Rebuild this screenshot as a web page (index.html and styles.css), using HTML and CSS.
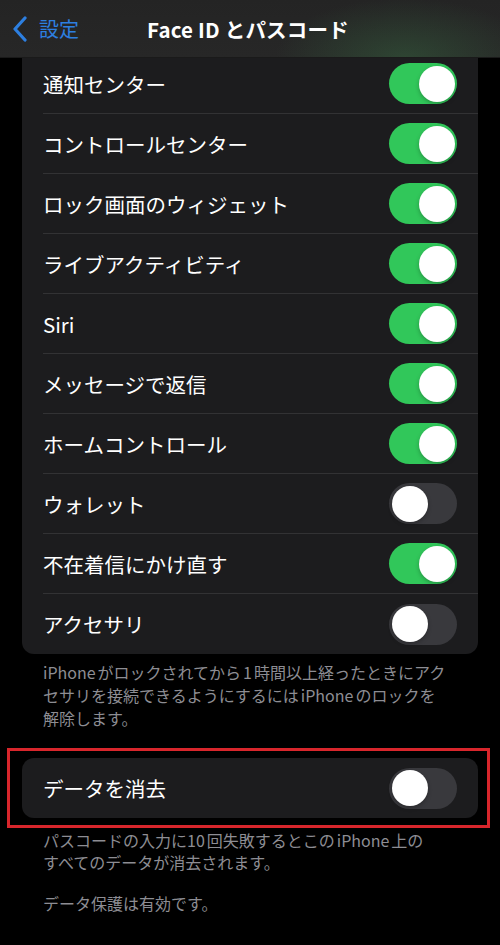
FILE: index.html
```html
<!DOCTYPE html>
<html lang="ja">
<head>
<meta charset="utf-8">
<link rel="stylesheet" href="styles.css">
</head>
<body>
<div class="screen">
  <header class="header">
    <div class="back">
      <svg class="chev" width="16" height="26" viewBox="0 0 16 26"><path d="M13 2 L3 13 L13 24" fill="none" stroke="#2d7fe0" stroke-width="3.2" stroke-linecap="round" stroke-linejoin="round"/></svg>
      <span class="back-label">設定</span>
    </div>
    <h1 class="title">Face ID とパスコード</h1>
  </header>

  <main class="content">
    <section class="card card-top">
      <div class="row"><span class="label">通知センター</span><span class="toggle on"><span class="knob"></span></span></div>
      <div class="row"><span class="label">コントロールセンター</span><span class="toggle on"><span class="knob"></span></span></div>
      <div class="row"><span class="label">ロック画面のウィジェット</span><span class="toggle on"><span class="knob"></span></span></div>
      <div class="row"><span class="label">ライブアクティビティ</span><span class="toggle on"><span class="knob"></span></span></div>
      <div class="row"><span class="label">Siri</span><span class="toggle on"><span class="knob"></span></span></div>
      <div class="row"><span class="label">メッセージで返信</span><span class="toggle on"><span class="knob"></span></span></div>
      <div class="row"><span class="label">ホームコントロール</span><span class="toggle on"><span class="knob"></span></span></div>
      <div class="row"><span class="label">ウォレット</span><span class="toggle"><span class="knob"></span></span></div>
      <div class="row"><span class="label">不在着信にかけ直す</span><span class="toggle on"><span class="knob"></span></span></div>
      <div class="row"><span class="label">アクセサリ</span><span class="toggle"><span class="knob"></span></span></div>
    </section>
    <p class="note note-first"><span class="latin">iPhone</span>がロックされてから<span class="latin">1</span>時間以上経ったときにアク<br>セサリを接続できるようにするには<span class="latin">iPhone</span>のロックを<br>解除します。</p>

    <div class="highlight">
      <section class="card">
        <div class="row"><span class="label">データを消去</span><span class="toggle"><span class="knob"></span></span></div>
      </section>
    </div>
    <div class="note note-second">
      <p>パスコードの入力に<span class="latin">10</span>回失敗するとこの<span class="latin">iPhone</span>上の<br>すべてのデータが消去されます。</p>
      <p class="para2">データ保護は有効です。</p>
    </div>
  </main>
</div>
</body>
</html>
```

FILE: styles.css
```css
* { box-sizing: border-box; }
html, body {
  margin: 0;
  padding: 0;
  background: #000;
}
body {
  font-family: "Noto Sans CJK JP", "Noto Sans", sans-serif;
  color: #fff;
}
.screen {
  position: relative;
  width: 500px;
  height: 945px;
  overflow: hidden;
  background: #000;
}
.header {
  position: absolute;
  top: 0;
  left: 0;
  right: 0;
  height: 58px;
  z-index: 2;
  display: flex;
  align-items: center;
  justify-content: center;
  background:
    radial-gradient(ellipse 130px 60px at 405px 58px, rgba(55, 105, 65, 0.45), rgba(55, 105, 65, 0) 100%),
    linear-gradient(180deg, #242424 0%, #272727 100%);
  border-bottom: 1px solid #1a1a1a;
}
.back {
  position: absolute;
  left: 12px;
  top: 16px;
  display: flex;
  align-items: center;
  gap: 11px;
}
.chev { display: block; }
.back-label {
  color: #2d7fe0;
  font-size: 20px;
  line-height: 26px;
}
.title {
  margin: 0 0 0 -4px;
  font-size: 20.5px;
  font-weight: 700;
  letter-spacing: 0.2px;
  line-height: 26px;
}
.content {
  padding-top: 54px;
}
.card {
  margin: 0 22px;
  background: #1c1c1e;
  border-radius: 12px;
}
.card-top { border-radius: 0 0 12px 12px; }
.highlight .card { margin: 0; }
.row {
  height: 60px;
  margin-left: 21px;
  padding-right: 21px;
  display: flex;
  align-items: center;
  justify-content: space-between;
  border-bottom: 1px solid #323234;
}
.row:last-child { border-bottom: none; }
.label {
  font-size: 20.5px;
  color: #fff;
  line-height: 28px;
}
.toggle {
  position: relative;
  width: 68px;
  height: 41px;
  border-radius: 21px;
  background: #39393d;
  flex: none;
}
.toggle.on { background: #31c75a; }
.knob {
  position: absolute;
  top: 2.5px;
  left: 2.5px;
  width: 36px;
  height: 36px;
  border-radius: 50%;
  background: #fff;
  box-shadow: 0 2px 4px rgba(0,0,0,0.25);
}
.toggle.on .knob { left: 29.5px; }
.note {
  margin: 0;
  color: #8d8d93;
  font-size: 16px;
  line-height: 23px;
  padding: 7px 20px 0 43px;
  white-space: nowrap;
}
.latin { margin: 0 2px; }
.note .latin:first-child { margin-left: 0; }
.highlight {
  margin: 18px 10px 0 7px;
  border: 3px solid #d8262c;
  padding: 7px 9px 7px 12px;
}
.note-second {
  padding-top: 1px;
  line-height: 22px;
}
.note-second p { margin: 0; }
.note-second .para2 { margin-top: 19px; }
```
